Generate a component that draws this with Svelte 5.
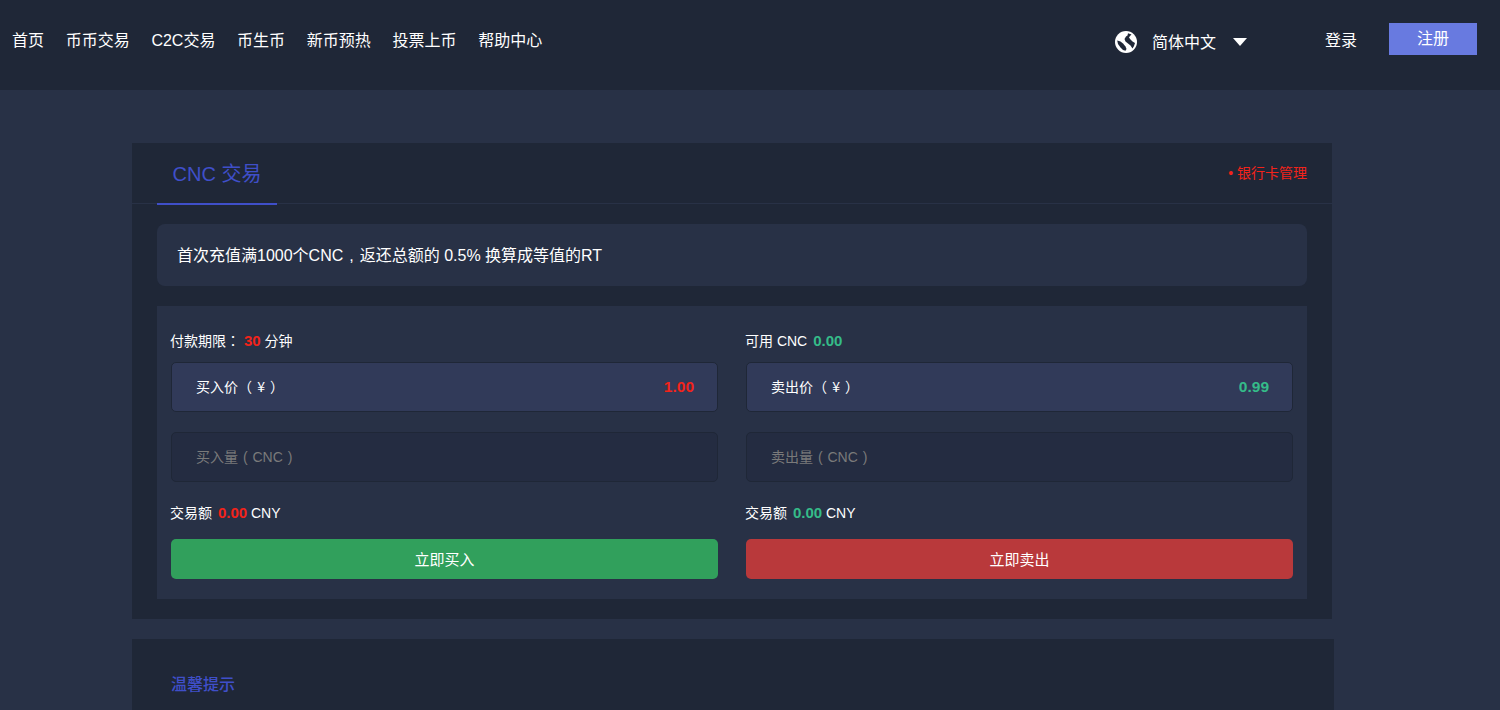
<script>
  const nav = ['首页', '币币交易', 'C2C交易', '币生币', '新币预热', '投票上币', '帮助中心'];
</script>

<div class="page">
  <header class="top">
    <nav class="nav">
      {#each nav as item}
        <span>{item}</span>
      {/each}
    </nav>
    <div class="lang">
      <svg class="globe" width="22" height="22" viewBox="0 0 22 22" aria-hidden="true">
        <circle cx="11" cy="11" r="11" fill="#fff" />
        <path d="M13 2.2 L16.5 3.4 L15 5 L14 6.5 L15.5 8.5 L17.5 10.5 L20 12 L19 15 L17.5 17.5 L15.5 14.5 L13 12.5 L10.5 10.5 L9.5 8 L11 5.5 L12.5 4.5 Z" fill="#1f2737" />
        <path d="M2.2 9.5 L5.5 10.5 L8 12.5 L10.5 15.5 L11.5 18 L10.5 19.8 L8 19 L5.5 16.5 L3 13 Z" fill="#1f2737" />
      </svg>
      <span class="lang-name">简体中文</span>
      <span class="caret"></span>
    </div>
    <span class="login">登录</span>
    <span class="register">注册</span>
  </header>

  <main class="main">
    <section class="panel">
      <div class="panel-head">
        <div class="tab">CNC 交易</div>
        <div class="bank">• 银行卡管理</div>
      </div>
      <div class="panel-body">
        <div class="notice">首次充值满1000个CNC<span class="comma">,</span>返还总额的 0.5% 换算成等值的RT</div>
        <div class="trade">
          <div class="col">
            <div class="info">付款期限<span class="tc">：</span> <b class="red">30</b> 分钟</div>
            <div class="field price">
              <span>买入价<span class="tc">（ ¥ ）</span></span>
              <b class="red">1.00</b>
            </div>
            <div class="field qty">买入量 ( CNC )</div>
            <div class="info total">交易额 <b class="red">0.00</b> CNY</div>
            <div class="btn buy">立即买入</div>
          </div>
          <div class="col">
            <div class="info avail">可用 CNC <b class="green">0.00</b></div>
            <div class="field price">
              <span>卖出价<span class="tc">（ ¥ ）</span></span>
              <b class="green">0.99</b>
            </div>
            <div class="field qty">卖出量 ( CNC )</div>
            <div class="info total">交易额 <b class="green">0.00</b> CNY</div>
            <div class="btn sell">立即卖出</div>
          </div>
        </div>
      </div>
    </section>

    <section class="tips">
      <h3>温馨提示</h3>
    </section>
  </main>
</div>

<style>
  :global(html), :global(body) {
    margin: 0;
    height: 100%;
    overflow: hidden;
    background: #283146;
  }
  .page {
    height: 710px;
    overflow: hidden;
    background: #283146;
    color: #fff;
    font-family: "Liberation Sans", "Noto Sans CJK SC", sans-serif;
    font-size: 14px;
  }
  .top {
    height: 90px;
    box-sizing: border-box;
    background: #1f2737;
    display: flex;
    align-items: center;
    padding: 0 23px 0 12px;
    font-size: 16px;
  }
  .nav {
    display: flex;
    gap: 21.7px;
    margin-top: -8px;
    line-height: 22px;
    flex: 1;
  }
  .lang {
    display: flex;
    align-items: center;
    margin-top: -7px;
    margin-right: 76px;
  }
  .lang-name {
    line-height: 22px;
    margin-top: 3px;
  }
  .globe {
    margin-right: 15px;
  }
  .caret {
    width: 0;
    height: 0;
    margin-left: 17px;
    margin-right: 2px;
    border-left: 7px solid transparent;
    border-right: 7px solid transparent;
    border-top: 8px solid #fff;
  }
  .login {
    line-height: 22px;
    margin-top: -8px;
    margin-right: 32px;
  }
  .register {
    width: 88px;
    height: 32px;
    line-height: 32px;
    margin-top: -12px;
    text-align: center;
    background: #687ae0;
  }
  .main {
    padding: 53px 0 0 132px;
  }
  .panel {
    width: 1200px;
    height: 476px;
    background: #1f2737;
  }
  .panel-head {
    height: 61px;
    box-sizing: border-box;
    border-bottom: 1px solid #283146;
    padding: 0 25px;
    display: flex;
    justify-content: space-between;
    align-items: center;
  }
  .tab {
    width: 120px;
    height: 62px;
    box-sizing: border-box;
    border-bottom: 2px solid #3f4fc9;
    color: #3f4fc9;
    font-size: 20px;
    line-height: 63px;
    text-align: center;
    align-self: flex-start;
  }
  .bank {
    color: #f3231a;
    font-size: 14px;
    margin-top: -3px;
  }
  .panel-body {
    padding: 20px 25px;
  }
  .notice {
    height: 62px;
    line-height: 64px;
    padding-left: 20px;
    border-radius: 8px;
    background: #283146;
    font-size: 16px;
  }
  .comma {
    margin: 0 6px;
  }
  .tc {
    font-family: "Noto Sans CJK TC", sans-serif;
    line-height: 0;
    word-spacing: 2px;
  }
  .trade {
    margin-top: 20px;
    height: 293px;
    box-sizing: border-box;
    padding: 20px 14px;
    background: #283146;
    display: flex;
    gap: 28px;
  }
  .col {
    flex: 1;
    min-width: 0;
  }
  .info {
    height: 16px;
    line-height: 16px;
    margin: 7px 0 13px -1px;
    font-size: 14px;
  }
  .info b {
    font-size: 15px;
  }
  .avail b,
  .total b {
    margin-left: 2px;
  }
  .total {
    margin: 23px 0 18px -1px;
  }
  .red {
    color: #f3231a;
  }
  .green {
    color: #35bc89;
  }
  .field {
    height: 50px;
    box-sizing: border-box;
    border: 1px solid #1f2737;
    border-radius: 5px;
    padding: 0 23px 2px 24px;
    display: flex;
    align-items: center;
    justify-content: space-between;
    font-size: 14px;
  }
  .price {
    background: #313a59;
  }
  .price b {
    font-size: 15.5px;
    margin-top: 1px;
  }
  .qty {
    margin-top: 20px;
    background: #242c41;
    color: #7a7a7a;
    font-size: 14px;
    word-spacing: 1px;
  }
  .btn {
    height: 40px;
    line-height: 41px;
    border-radius: 5px;
    text-align: center;
    font-size: 15px;
  }
  .buy {
    background: #31a05c;
  }
  .sell {
    background: #b9393b;
  }
  .tips {
    width: 1202px;
    height: 71px;
    margin-top: 20px;
    background: #1f2737;
    box-sizing: border-box;
    padding: 34px 39px 0;
  }
  h3 {
    margin: 0;
    font-size: 16px;
    line-height: 24px;
    font-weight: 500;
    color: #3f4fc9;
  }
</style>
